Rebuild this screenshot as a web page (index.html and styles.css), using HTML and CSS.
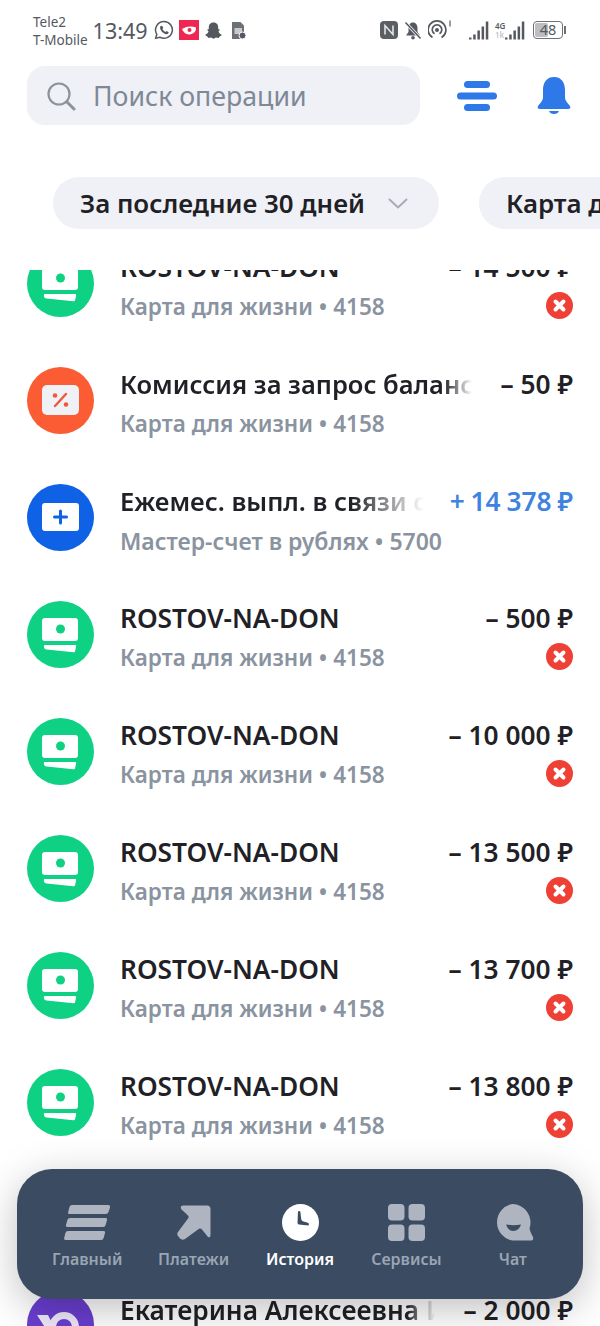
FILE: index.html
```html
<!DOCTYPE html>
<html lang="ru">
<head>
    <meta charset="UTF-8">
    <meta name="viewport" content="width=device-width, initial-scale=1.0">
    <title>История</title>
    <link rel="stylesheet" href="styles.css">
</head>
<body>
    <svg class="defs" width="0" height="0">
        <symbol id="ic-card" viewBox="0 0 67 67">
            <circle cx="33.5" cy="33.5" r="33.5" fill="#0fd184"/>
            <rect x="15" y="17" width="36" height="23" rx="3" fill="#fff"/>
            <circle cx="33.5" cy="28" r="4.5" fill="#0fd184"/>
            <path d="M17.500 44H48.500Q49.500 44 49 46L48 50.500Q47.800 51.500 46.500 51.300L19.500 48.500Q17.500 48.300 17 46.500Q16.500 44 17.500 44Z" fill="#fff"/>
        </symbol>
        <symbol id="ic-fail" viewBox="0 0 27 27">
            <circle cx="13.500" cy="13.500" r="13.500" fill="#ee4035"/>
            <path d="M9.500 9.500L17.500 17.500M17.500 9.500L9.500 17.500" stroke="#fff" stroke-width="4" stroke-linecap="round"/>
        </symbol>
    </svg>

    <!-- Status bar -->
    <div class="status-bar">
        <div class="carriers"><span>Tele2</span><span>T-Mobile</span></div>
        <div class="clock">13:49</div>
        <svg class="st-icon" width="20" height="20" viewBox="0 0 20 20"><path d="M10 1.500A8.400 8.400 0 0 0 2.800 14.300L1.700 18.300 5.800 17.200A8.400 8.400 0 1 0 10 1.500Z" fill="none" stroke="#55595f" stroke-width="1.500"/><path d="M7 5.800C5.800 6.600 5.700 8.400 7 10.500S10.800 14.300 12.600 14.200C14 14 14.800 13 14.600 12.200L12.600 11.100 11.600 12C10.500 11.700 8.900 10.100 8.500 9L9.300 8 8.300 5.900Z" fill="#55595f"/></svg>
        <svg class="st-icon" width="20" height="20" viewBox="0 0 20 20"><rect width="20" height="20" fill="#ee2752"/><path d="M3 9Q10 5 17 7.500 17.500 13 11 14.500 5 14.500 3 9Z" fill="#fff"/><circle cx="10.500" cy="10" r="2" fill="#ee2752"/></svg>
        <svg class="st-icon st-snap" width="19" height="19" viewBox="0 0 19 19"><path d="M9.500 1.500C6 1.500 4.800 4 4.800 6.500V8L3 8.800 4.500 10.300C4 12.300 2.800 13.300 1 14L3.200 15.500 4.500 17 7 16.500 9.500 17.800 12 16.500 14.500 17 15.800 15.500 18 14C16.200 13.300 15 12.300 14.500 10.300L16 8.800 14.200 8V6.500C14.200 4 13 1.500 9.500 1.500Z" fill="#55595f"/></svg>
        <svg class="st-icon" width="15" height="19" viewBox="0 0 15 19"><path d="M1 1H9.500L13 4.500V18H1Z" fill="#6d7176"/><rect x="3.500" y="7" width="7.500" height="6" fill="#c9cbce"/><circle cx="11.500" cy="14.500" r="3.500" fill="#55595f" stroke="#fff"/></svg>
        <div class="status-right">
            <svg width="18" height="18" viewBox="0 0 18 18"><rect width="18" height="18" rx="4" fill="#5b5f64"/><path d="M5 13.500V4.500L13 13.500V4.500" fill="none" stroke="#e4e5e6" stroke-width="1.600"/></svg>
            <svg width="18" height="19" viewBox="0 0 18 19"><path d="M9 1.500C6 1.500 4.500 4 4.500 7V11L2 14.500H16L13.500 11V7C13.500 4 12 1.500 9 1.500Z" fill="#55595f"/><circle cx="9" cy="16.800" r="1.800" fill="#55595f"/><path d="M1.500 1.500L16.500 17.500" stroke="#fff" stroke-width="3"/><path d="M1.500 1.500L16.500 17.500" stroke="#55595f" stroke-width="1.500"/></svg>
            <svg class="hotspot" width="24" height="20" viewBox="0 0 24 20"><g fill="none" stroke="#55595f" stroke-width="1.700"><path d="M4.500 17.500A8.900 8.900 0 1 1 13.500 17.500"/><path d="M6.500 13.800A4.800 4.800 0 1 1 11.500 13.800"/></g><circle cx="9" cy="10" r="2" fill="#55595f"/><path d="M22 0.500V6.500" stroke="#55595f" stroke-width="1.200"/></svg>
            <svg class="signal" width="21" height="19" viewBox="0 0 21 19"><path d="M1 16.500h2.500v2H1zM5.200 13.500h2.500v5H5.200zM9.400 9.500h2.500v9H9.400zM13.600 5.500h2.500v13h-2.500zM17.800 .5h2.500v18h-2.500z" fill="#55595f"/></svg>
            <svg width="30" height="19" viewBox="0 0 30 19"><text x="0" y="8" class="net-text">4G</text><text x="0" y="17" class="net-text net-off">1k</text><path d="M10 16.500h2.500v2H10zM14.200 13.500h2.500v5h-2.500zM18.400 9.500h2.500v9h-2.500zM22.600 5.500h2.500v13h-2.500zM26.800 .5h2.500v18h-2.500z" fill="#55595f"/></svg>
            <div class="battery"><span class="battery-fill"></span><span class="battery-num">48</span></div>
            <span class="battery-tip"></span>
        </div>
    </div>

    <!-- Search -->
    <div class="top-row">
        <div class="search">
            <svg width="30" height="30" viewBox="0 0 30 30"><circle cx="13" cy="13" r="10.500" fill="none" stroke="#8c939d" stroke-width="2.200"/><path d="M21 21L28 28" stroke="#8c939d" stroke-width="3" stroke-linecap="round"/></svg>
            <span class="search-text">Поиск операции</span>
        </div>
        <svg class="top-menu" width="40" height="30" viewBox="0 0 40 30"><rect x="7" y="0" width="26" height="7" rx="3.500"/><rect x="0" y="11.500" width="40" height="7" rx="3.500"/><rect x="7" y="23" width="26" height="7" rx="3.500"/></svg>
        <svg class="top-bell" width="34" height="38" viewBox="0 0 34 38"><path d="M17 0C9 0 6 6.500 6 13V20C6 24 3 26 1 29 0 31 1 32 3 32H31C33 32 34 31 33 29 31 26 28 24 28 20V13C28 6.500 25 0 17 0Z"/><path d="M12 34H22C21 38 13 38 12 34Z"/></svg>
    </div>

    <!-- Filters -->
    <div class="filters">
        <div class="chip chip-period">За последние 30 дней
            <svg width="20" height="11" viewBox="0 0 20 11"><path d="M1.500 1.500L10 9.500L18.500 1.500" fill="none" stroke="#a6acb6" stroke-width="2" stroke-linecap="round"/></svg>
        </div>
        <div class="chip">Карта для жизни</div>
    </div>

    <!-- Operations -->
    <div class="list">
        <div class="list-inner">
            <div class="row">
                <svg class="row-icon"><use href="#ic-card"/></svg>
                <div class="row-body">
                    <div class="line"><span class="title">ROSTOV-NA-DON</span><span class="amount">– 14 500 ₽</span></div>
                    <div class="line"><span class="sub">Карта для жизни • 4158</span><svg class="fail"><use href="#ic-fail"/></svg></div>
                </div>
            </div>
            <div class="row">
                <svg class="row-icon" viewBox="0 0 67 67"><circle cx="33.500" cy="33.500" r="33.500" fill="#fb5c33"/><rect x="15" y="18" width="37" height="30" rx="5" fill="#f0f1f6"/><path d="M39 27L28 39" stroke="#f0583a" stroke-width="2.400" stroke-linecap="round"/><circle cx="28" cy="28.500" r="2.300" fill="#f0583a"/><circle cx="39" cy="37.500" r="2.300" fill="#f0583a"/></svg>
                <div class="row-body">
                    <div class="line"><span class="title fade title-a">Комиссия за запрос баланса</span><span class="amount">– 50 ₽</span></div>
                    <div class="line"><span class="sub">Карта для жизни • 4158</span></div>
                </div>
            </div>
            <div class="row">
                <svg class="row-icon" viewBox="0 0 67 67"><circle cx="33.500" cy="33.500" r="33.500" fill="#0f62e6"/><rect x="15" y="19" width="37" height="28" rx="3" fill="#fff"/><path d="M33.500 27V39M27.500 33H39.500" stroke="#0f62e6" stroke-width="3" stroke-linecap="round"/></svg>
                <div class="row-body">
                    <div class="line"><span class="title fade title-b">Ежемес. выпл. в связи с</span><span class="amount plus">+ 14 378 ₽</span></div>
                    <div class="line"><span class="sub sub-master">Мастер-счет в рублях • 5700</span></div>
                </div>
            </div>
            <div class="row">
                <svg class="row-icon"><use href="#ic-card"/></svg>
                <div class="row-body">
                    <div class="line"><span class="title">ROSTOV-NA-DON</span><span class="amount">– 500 ₽</span></div>
                    <div class="line"><span class="sub">Карта для жизни • 4158</span><svg class="fail"><use href="#ic-fail"/></svg></div>
                </div>
            </div>
            <div class="row">
                <svg class="row-icon"><use href="#ic-card"/></svg>
                <div class="row-body">
                    <div class="line"><span class="title">ROSTOV-NA-DON</span><span class="amount">– 10 000 ₽</span></div>
                    <div class="line"><span class="sub">Карта для жизни • 4158</span><svg class="fail"><use href="#ic-fail"/></svg></div>
                </div>
            </div>
            <div class="row">
                <svg class="row-icon"><use href="#ic-card"/></svg>
                <div class="row-body">
                    <div class="line"><span class="title">ROSTOV-NA-DON</span><span class="amount">– 13 500 ₽</span></div>
                    <div class="line"><span class="sub">Карта для жизни • 4158</span><svg class="fail"><use href="#ic-fail"/></svg></div>
                </div>
            </div>
            <div class="row">
                <svg class="row-icon"><use href="#ic-card"/></svg>
                <div class="row-body">
                    <div class="line"><span class="title">ROSTOV-NA-DON</span><span class="amount">– 13 700 ₽</span></div>
                    <div class="line"><span class="sub">Карта для жизни • 4158</span><svg class="fail"><use href="#ic-fail"/></svg></div>
                </div>
            </div>
            <div class="row">
                <svg class="row-icon"><use href="#ic-card"/></svg>
                <div class="row-body">
                    <div class="line"><span class="title">ROSTOV-NA-DON</span><span class="amount">– 13 800 ₽</span></div>
                    <div class="line"><span class="sub">Карта для жизни • 4158</span><svg class="fail"><use href="#ic-fail"/></svg></div>
                </div>
            </div>
            <div class="row row-person">
                <svg class="row-icon" viewBox="0 0 67 67"><circle cx="33.500" cy="33.500" r="33.500" fill="#6a3ed0"/><path d="M10 24H21L27 36 22 50H16L19 38Z" fill="#eee8fa"/><circle cx="37" cy="36" r="11.500" fill="none" stroke="#eee8fa" stroke-width="7"/></svg>
                <div class="row-body">
                    <div class="line"><span class="title fade title-c">Екатерина Алексеевна И</span><span class="amount">– 2 000 ₽</span></div>
                </div>
            </div>
        </div>
    </div>

    <!-- Bottom menu -->
    <nav class="tabbar">
        <div class="tab">
            <svg width="46" height="35" viewBox="0 0 46 35"><path d="M8 0H44Q46.500 0 46 2.500L44.500 7Q44 9 41.500 9H5.500Q3.500 9 4.200 7L5.500 2Q6 0 8 0ZM6 13H41.500Q43.500 13 43 15L41.800 19.500Q41.300 22 39 22H3.500Q1.500 22 2 20L3.400 15Q4 13 6 13ZM4 26H39.500Q41.500 26 41 28L39.800 32.500Q39.300 35 37 35H2Q-.5 35 .2 33L1.400 28Q2 26 4 26Z"/></svg>
            <span>Главный</span>
        </div>
        <div class="tab">
            <svg width="34" height="35" viewBox="0 0 34 35"><path d="M6 .5H30Q33.500 .5 33.500 4V30Q33.500 33 31 32L25 24.500Q23 22.500 21 24.500L8 34Q5 35.500 3 33.500L1 31Q-.5 29 1 27L11 13.500Q12.500 11.500 10.500 10L4.500 4.500Q2.500 1 6 .5Z"/></svg>
            <span>Платежи</span>
        </div>
        <div class="tab tab-active">
            <svg width="37" height="37" viewBox="0 0 37 37"><circle cx="18.500" cy="18.500" r="18.500" fill="#fff"/><path d="M16 7.500Q17.200 6.500 18.300 7.500L19.300 15.500Q19.500 16.800 20.800 17.300L26.500 19Q27.300 20.500 26.500 21.500L17 20.500Q15.500 20.300 15.500 18.800Z" fill="#3a4b62"/></svg>
            <span>История</span>
        </div>
        <div class="tab">
            <svg width="37" height="37" viewBox="0 0 37 37"><rect width="16.500" height="16.500" rx="4"/><rect x="20.500" width="16.500" height="16.500" rx="4"/><rect y="20.500" width="16.500" height="16.500" rx="4"/><rect x="20.500" y="20.500" width="16.500" height="16.500" rx="4"/></svg>
            <span>Сервисы</span>
        </div>
        <div class="tab tab-chat">
            <svg width="40" height="37" viewBox="0 0 40 37"><path d="M18.500 0A18.500 18.500 0 0 1 35.500 24.500Q36 28 39 33Q40 36.500 36.500 36.500H18.500A18.500 18.500 0 0 1 18.500 0Z"/><path d="M12 20.500Q19.500 22 27 20.500Q25 27 19.500 27Q14 27 12 20.500Z" fill="#3a4b62"/></svg>
            <span>Чат</span>
        </div>
    </nav>
</body>
</html>
```

FILE: styles.css
```css
* {
    margin: 0;
    padding: 0;
    box-sizing: border-box;
}
html, body {
    width: 600px;
    height: 1326px;
    overflow: hidden;
    background-color: #ffffff;
}
body {
    position: relative;
    font-family: "Noto Sans", "Open Sans", sans-serif;
    color: #1f2126;
}
.defs {
    position: absolute;
}
/* Status bar */
.status-bar {
    height: 66px;
    padding: 0 34px 6px 33px;
    display: flex;
    align-items: center;
    color: #55595f;
}
.carriers {
    display: flex;
    flex-direction: column;
    font-size: 13.5px;
    line-height: 18px;
    margin-top: 1px;
}
.clock {
    font-size: 21.5px;
    margin-left: 5px;
    margin-right: 6px;
}
.st-icon {
    margin-right: 5px;
}
.st-snap {
    margin-right: 8px;
}
.status-right {
    margin-left: auto;
    display: flex;
    align-items: center;
    gap: 6px;
}
.hotspot {
    margin-right: 10px;
}
.net-text {
    font-size: 8px;
    font-weight: 600;
    fill: #55595f;
}
.net-off {
    fill: #c5c7ca;
}
.battery {
    position: relative;
    width: 30px;
    height: 18px;
    margin-left: 2px;
    border: 1.5px solid #6d7176;
    border-radius: 4px;
    font-size: 14.500px;
    line-height: 15px;
    text-align: center;
}
.battery-fill {
    position: absolute;
    left: 1px;
    top: 1px;
    bottom: 1px;
    width: 13px;
    background-color: #bcbec1;
    border-radius: 2px;
}
.battery-num {
    position: relative;
}
.battery-tip {
    width: 2px;
    height: 8px;
    margin-left: -5px;
    background-color: #6d7176;
}
/* Search */
.top-row {
    height: 59px;
    padding-left: 27px;
    display: flex;
    align-items: center;
}
.search {
    width: 393px;
    height: 59px;
    padding-left: 19px;
    display: flex;
    align-items: center;
    gap: 17px;
    background-color: #eff1f6;
    border-radius: 18px;
}
.search-text {
    font-size: 26.7px;
    color: #7e8896;
}
.top-menu {
    margin-left: 37px;
    fill: #2f78e8;
}
.top-bell {
    margin-left: 40px;
    fill: #2f78e8;
}
/* Filters */
.filters {
    margin-top: 52px;
    padding-left: 53px;
    height: 52px;
    display: flex;
    gap: 40px;
    white-space: nowrap;
}
.chip {
    flex-shrink: 0;
    height: 52px;
    padding: 0 27px;
    display: flex;
    align-items: center;
    gap: 23px;
    background-color: #f0f1f6;
    border-radius: 26px;
    font-size: 25.900px;
    font-weight: 600;
}
.chip-period {
    padding-right: 31px;
}
/* Operations */
.list {
    margin-top: 41px;
    height: 1056px;
    overflow: hidden;
}
.list-inner {
    margin-top: -45px;
    padding: 0 27px;
}
.row {
    height: 117px;
    display: flex;
    align-items: center;
    gap: 26px;
}
.row-person {
    margin-top: 105px;
}
.row-icon {
    width: 67px;
    height: 67px;
    flex-shrink: 0;
}
.row-body {
    flex: 1;
    min-width: 0;
    padding-top: 6px;
    display: flex;
    flex-direction: column;
    gap: 2px;
}
.row-person .row-body {
    align-self: flex-start;
    padding-top: 25px;
}
.line {
    height: 38px;
    display: flex;
    align-items: center;
    justify-content: space-between;
}
.title {
    font-size: 26.300px;
    font-weight: 600;
    white-space: nowrap;
    overflow: hidden;
}
.fade {
    -webkit-mask-image: linear-gradient(to right, #000 calc(100% - 28px), transparent 100%);
    mask-image: linear-gradient(to right, #000 calc(100% - 28px), transparent 100%);
}
.title-a {
    width: 352px;
    font-size: 25.500px;
}
.title-b {
    width: 304px;
    font-size: 25.500px;
    -webkit-mask-image: linear-gradient(to right, #000 calc(100% - 72px), transparent 100%);
    mask-image: linear-gradient(to right, #000 calc(100% - 72px), transparent 100%);
}
.title-c {
    width: 315px;
}
.amount {
    font-size: 26.300px;
    font-weight: 600;
    white-space: nowrap;
}
.plus {
    color: #3f83e0;
    word-spacing: -1px;
}
.sub {
    font-size: 22.500px;
    font-weight: 600;
    color: #8a93a0;
    white-space: nowrap;
}
.sub-master {
    font-size: 23px;
}
.fail {
    width: 27px;
    height: 27px;
    margin-top: -2px;
}
/* Bottom menu */
.tabbar {
    position: absolute;
    left: 17px;
    top: 1169px;
    width: 566px;
    height: 130px;
    padding: 35px 17px 0;
    display: flex;
    background-color: #3a4b62;
    border-radius: 35px;
    box-shadow: 0 10px 40px rgba(0, 0, 0, 0.25);
}
.tab {
    flex: 1;
    display: flex;
    flex-direction: column;
    align-items: center;
    fill: #aeb5c0;
    color: #9aa5b3;
    font-size: 16px;
    font-weight: 600;
}
.tab svg {
    height: 37px;
}
.tab span {
    margin-top: 7px;
}
.tab-active {
    color: #ffffff;
}
.tab-chat svg {
    margin-left: 3px;
}
```
